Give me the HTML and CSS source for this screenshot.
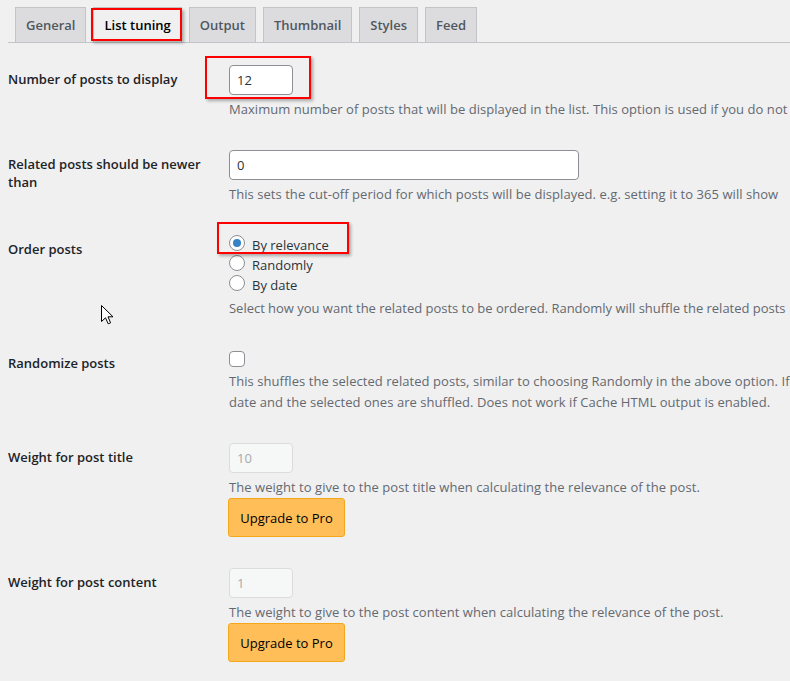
FILE: index.html
```html
<!DOCTYPE html>
<html lang="en">
<head>
<meta charset="utf-8">
<title>List tuning</title>
<link rel="stylesheet" href="styles.css">
</head>
<body>
<div class="page">
  <nav class="tabs">
    <span class="tab">General</span>
    <span class="tab tab-active mark mark-tab">List tuning</span>
    <span class="tab">Output</span>
    <span class="tab">Thumbnail</span>
    <span class="tab">Styles</span>
    <span class="tab">Feed</span>
  </nav>

  <div class="form">
    <div class="row">
      <div class="label">Number of posts to display</div>
      <div class="field">
        <span class="mark mark-num"><input class="input input-small" type="text" value="12"></span>
        <p class="desc">Maximum number of posts that will be displayed in the list. This option is used if you do not</p>
      </div>
    </div>

    <div class="row">
      <div class="label">Related posts should be newer than</div>
      <div class="field">
        <input class="input input-wide" type="text" value="0">
        <p class="desc">This sets the cut-off period for which posts will be displayed. e.g. setting it to 365 will show</p>
      </div>
    </div>

    <div class="row">
      <div class="label">Order posts</div>
      <div class="field">
        <div class="radios">
          <span class="mark mark-radio"><span class="radio-line"><span class="radio radio-on"></span>By relevance</span></span>
          <span class="radio-line"><span class="radio"></span>Randomly</span>
          <span class="radio-line"><span class="radio"></span>By date</span>
        </div>
        <p class="desc desc-tight">Select how you want the related posts to be ordered. Randomly will shuffle the related posts</p>
      </div>
    </div>

    <div class="row">
      <div class="label">Randomize posts</div>
      <div class="field">
        <span class="checkbox"></span>
        <p class="desc">This shuffles the selected related posts, similar to choosing Randomly in the above option. If<br>date and the selected ones are shuffled. Does not work if Cache HTML output is enabled.</p>
      </div>
    </div>

    <div class="row">
      <div class="label">Weight for post title</div>
      <div class="field">
        <input class="input input-small input-disabled" type="text" value="10" disabled>
        <p class="desc">The weight to give to the post title when calculating the relevance of the post.</p>
        <span class="btn-pro">Upgrade to Pro</span>
      </div>
    </div>

    <div class="row row-spaced">
      <div class="label">Weight for post content</div>
      <div class="field">
        <input class="input input-small input-disabled" type="text" value="1" disabled>
        <p class="desc">The weight to give to the post content when calculating the relevance of the post.</p>
        <span class="btn-pro">Upgrade to Pro</span>
      </div>
    </div>
  </div>

  <svg class="cursor" width="13" height="20" viewBox="0 0 13 20" aria-hidden="true">
    <path d="M0.5 0.5 V16.5 L4.5 12.8 L7.2 18.8 L9.6 17.8 L7 11.8 H12 Z" fill="#fff" stroke="#000" stroke-width="1" stroke-linejoin="miter"/>
  </svg>
</div>
</body>
</html>
```
FILE: styles.css
```css
html, body {
  margin: 0;
  background: #f0f0f1;
  overflow: hidden;
}

body {
  font-family: "Open Sans", "Noto Sans", "Liberation Sans", sans-serif;
  color: #3c434a;
}

.page {
  position: relative;
  height: 681px;
  padding-left: 8px;
}

/* tabs */
.tabs {
  display: flex;
  gap: 7px;
  padding: 7px 0 0 7px;
  border-bottom: 1px solid #c3c4c7;
}

.tab {
  border: 1px solid #c3c4c7;
  border-bottom: none;
  background: #dcdcde;
  color: #50575e;
  font-size: 13px;
  font-weight: 600;
  line-height: 24px;
  padding: 5px 10px;
  white-space: nowrap;
}

.tab-active {
  background: #f0f0f1;
  color: #000;
}

/* red annotation boxes */
.mark {
  position: relative;
}

.mark::after {
  content: "";
  position: absolute;
  border: 2px solid #ff0000;
  box-shadow: 2px 2px 3px rgba(0, 0, 0, 0.3);
  pointer-events: none;
}

.mark-tab::after {
  left: -3px;
  right: -1px;
  top: 0;
  bottom: 1px;
}

.mark-num {
  display: inline-block;
  line-height: 0;
}

.mark-num::after {
  left: -24px;
  right: -18px;
  top: -9px;
  bottom: -4px;
}

.mark-radio {
  display: flex;
}

.mark-radio::after {
  left: -12px;
  right: -20px;
  top: -13px;
  bottom: 1px;
}

/* form */
.form {
  padding-top: 7px;
}

.row {
  display: grid;
  grid-template-columns: 220px 1fr;
}

.row-spaced {
  margin-top: 1px;
}

.label {
  padding: 20px 20px 20px 0;
  font-size: 13px;
  font-weight: 600;
  line-height: 18px;
  color: #1d2327;
}

.field {
  padding: 15px 0;
  display: flex;
  flex-direction: column;
  align-items: flex-start;
  min-width: 0;
  padding-left: 1px;
}

.input {
  box-sizing: border-box;
  height: 30px;
  margin: 0;
  padding: 0 7px;
  border: 1px solid #8c8f94;
  border-radius: 4px;
  background: #fff;
  color: #2c3338;
  font-family: inherit;
  font-size: 13px;
  outline: none;
}

.input-small {
  width: 64px;
}

.input-wide {
  width: 350px;
}

.input-disabled {
  background: #f6f7f7;
  border-color: #dcdcde;
  color: #a7aaad;
}

.desc {
  margin: 4px 0 0;
  font-size: 13px;
  letter-spacing: 0.05px;
  line-height: 21px;
  color: #646970;
  white-space: nowrap;
}

.desc-tight {
  margin-top: 3px;
  letter-spacing: -0.02px;
}

/* radios */
.radios {
  display: flex;
  flex-direction: column;
}

.radio-line {
  display: flex;
  align-items: center;
  gap: 7px;
  height: 20px;
  font-size: 13px;
  color: #2c3338;
}

.radio {
  box-sizing: border-box;
  width: 16px;
  height: 16px;
  margin-bottom: 4px;
  border: 1px solid #8c8f94;
  border-radius: 50%;
  background: #fff;
  display: grid;
  place-items: center;
}

.radio-on::after {
  content: "";
  width: 8px;
  height: 8px;
  border-radius: 50%;
  background: #3582c4;
}

.checkbox {
  box-sizing: border-box;
  width: 16px;
  height: 16px;
  margin-top: 2px;
  border: 1px solid #8c8f94;
  border-radius: 4px;
  background: #fff;
}

/* pro button */
.btn-pro {
  box-sizing: border-box;
  width: 117px;
  height: 39px;
  margin-left: -1px;
  display: flex;
  align-items: center;
  justify-content: center;
  background: #ffbe58;
  border: 1px solid #f4a718;
  border-radius: 3px;
  color: #000;
  font-size: 13px;
}

/* mouse pointer on the screenshot */
.cursor {
  position: absolute;
  left: 101px;
  top: 305px;
}
```
